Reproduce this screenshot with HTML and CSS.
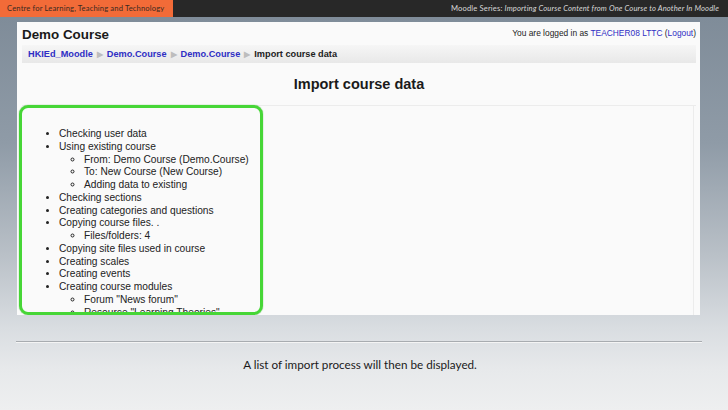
FILE: index.html
```html
<!DOCTYPE html>
<html lang="en">

<head>
    <meta charset="UTF-8">
    <title>Importing Course Content</title>
    <link rel="stylesheet" href="styles.css">
</head>

<body>
    <div class="topBar">
        <div class="centreName">Centre for Learning, Teaching and Technology</div>
        <div class="series">Moodle Series: <em>Importing Course Content from One Course to Another In Moodle</em></div>
    </div>
    <div class="slide">
        <div class="shot">
            <div class="header">
                <h1 class="courseName">Demo Course</h1>
                <div class="logininfo">You are logged in as <a href="#">TEACHER08 LTTC</a> (<a href="#">Logout</a>)</div>
            </div>
            <div class="navbar">
                <a href="#">HKIEd_Moodle</a><span class="sep">&#9654;</span><a href="#">Demo.Course</a><span class="sep">&#9654;</span><a href="#">Demo.Course</a><span class="sep">&#9654;</span><span class="here">Import course data</span>
            </div>
            <h2 class="pageTitle">Import course data</h2>
            <div class="content">
                <div class="highlight">
                    <ul class="steps">
                        <li>Checking user data</li>
                        <li>Using existing course
                            <ul>
                                <li>From: Demo Course (Demo.Course)</li>
                                <li>To: New Course (New Course)</li>
                                <li>Adding data to existing</li>
                            </ul>
                        </li>
                        <li>Checking sections</li>
                        <li>Creating categories and questions</li>
                        <li>Copying course files. .
                            <ul>
                                <li>Files/folders: 4</li>
                            </ul>
                        </li>
                        <li>Copying site files used in course</li>
                        <li>Creating scales</li>
                        <li>Creating events</li>
                        <li>Creating course modules
                            <ul>
                                <li>Forum "News forum"</li>
                                <li>Resource "Learning Theories"</li>
                            </ul>
                        </li>
                    </ul>
                </div>
            </div>
        </div>
        <hr class="rule">
        <p class="caption">A list of import process will then be displayed.</p>
    </div>
</body>

</html>
```

FILE: styles.css
```css
html,
body {
    margin: 0;
    padding: 0;
}

body {
    width: 728px;
    height: 410px;
    overflow: hidden;
    background: linear-gradient(to bottom, #7d8a97 0%, #8f9ba7 35%, #b9c0c7 62%, #d9dde1 80%, #e7e9eb 90%, #eeeff0 100%);
}

div.topBar {
    display: flex;
    height: 17px;
    background-color: #282828;
    font-family: "Lato", "DejaVu Sans", sans-serif;
    font-size: 7.6px;
    letter-spacing: 0.15px;
    line-height: 17px;
}

div.centreName {
    width: 166px;
    padding-left: 7px;
    background-color: #f26b38;
    color: #3a2a22;
}

div.series {
    flex: 1;
    text-align: right;
    padding-right: 9px;
    color: #d8d8d8;
}

div.series em {
    font-style: italic;
}

div.slide {
    padding: 5px 0 0 17px;
}

div.shot {
    width: 678px;
    height: 293px;
    padding-left: 5px;
    overflow: hidden;
    background-color: #fafafa;
    font-family: "Liberation Sans", Arial, sans-serif;
    color: #1a1a1a;
}

div.header {
    display: flex;
    justify-content: space-between;
    align-items: flex-start;
    height: 16px;
    padding: 5px 4px 0 0;
}

h1.courseName {
    margin: 0;
    font-size: 13.4px;
    line-height: 16px;
    font-weight: bold;
}

div.logininfo {
    margin-top: 1px;
    font-size: 8.4px;
    line-height: 10px;
    color: #222;
}

div.logininfo a,
div.navbar a {
    color: #2e2ec4;
    text-decoration: none;
}

div.navbar {
    margin: 2px 4px 0 0;
    height: 18px;
    padding-left: 6px;
    background: linear-gradient(to bottom, #f6f6f6, #e8e8e8);
    font-size: 9.2px;
    font-weight: bold;
    line-height: 18px;
}

span.sep {
    color: #bdbdbd;
    font-size: 7.5px;
    margin: 0 4px;
}

span.here {
    color: #222;
}

h2.pageTitle {
    margin: 0 4px 0 0;
    height: 42px;
    text-align: center;
    font-size: 14.5px;
    line-height: 42px;
    font-weight: bold;
    border-bottom: 1px solid #ececec;
}

div.content {
    margin: 0 6px 0 -2px;
    height: 220px;
    border-right: 1px solid #ececec;
}

div.highlight {
    position: relative;
    width: 244px;
    height: 210px;
    margin: -1px 0 0 -1px;
}

div.highlight::after {
    content: "";
    position: absolute;
    top: 0;
    left: 0;
    right: 0;
    bottom: 0;
    border: 3px solid #46d636;
    border-radius: 9px;
    box-shadow: 0 0 1px #2f9a25;
}

ul.steps {
    margin: 0;
    padding: 23px 0 0 40px;
    font-size: 10.2px;
    line-height: 12.75px;
    color: #222;
}

ul.steps ul {
    margin: 0;
    padding-left: 25px;
    list-style-type: circle;
}

hr.rule {
    width: 686px;
    margin: 26px 0 0 -1px;
    border: 0;
    border-top: 1px solid #a8acb0;
    border-bottom: 1px solid #f4f4f4;
}

p.caption {
    margin: 14px 0 0 0;
    padding-right: 25px;
    text-align: center;
    font-family: "Lato", "Open Sans", sans-serif;
    font-size: 11.7px;
    color: #1a1a1a;
}
```
